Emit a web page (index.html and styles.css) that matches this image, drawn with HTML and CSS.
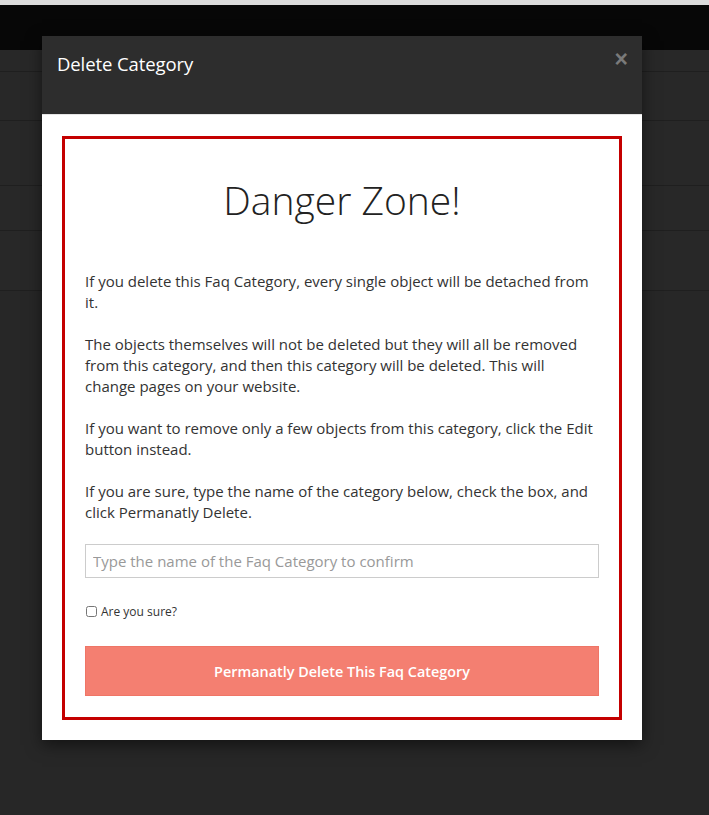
FILE: index.html
```html
<!DOCTYPE html>
<html>
<head>
<meta charset="utf-8">
<link rel="stylesheet" href="styles.css">
</head>
<body>
<div class="page">
  <div class="topstrip"></div>
  <div class="topbar"></div>
  <div class="rows">
    <div class="row r1"></div>
    <div class="row r2"></div>
    <div class="row r3"></div>
    <div class="row r4"></div>
    <div class="row r5"></div>
  </div>
</div>
<div class="modal">
  <div class="modal-header">
    <h4 class="modal-title">Delete Category</h4>
    <span class="close">&times;</span>
  </div>
  <div class="modal-body">
    <div class="danger">
      <h1 class="danger-title">Danger Zone!</h1>
      <p>If you delete this Faq Category, every single object will be detached from it.</p>
      <p>The objects themselves will not be deleted but they will all be removed from this category, and then this category will be deleted. This will change pages on your website.</p>
      <p>If you want to remove only a few objects from this category, click the Edit button instead.</p>
      <p>If you are sure, type the name of the category below, check the box, and click Permanatly Delete.</p>
      <input class="confirm-input" type="text" placeholder="Type the name of the Faq Category to confirm">
      <label class="check"><input type="checkbox"> Are you sure?</label>
      <button class="delete-btn">Permanatly Delete This Faq Category</button>
    </div>
  </div>
</div>
</body>
</html>
```
FILE: styles.css
```css
html, body {
  margin: 0;
  padding: 0;
  height: 100%;
}
body {
  background: #272727;
  font-family: "Open Sans", "Liberation Sans", sans-serif;
  overflow: hidden;
}
.topstrip {
  height: 5px;
  background: #dcdcdc;
}
.topbar {
  height: 45px;
  background: #070707;
}
.row {
  background: #282828;
  border-bottom: 1px solid #1f1f1f;
}
.r1 { height: 21px; }
.r2 { height: 48px; }
.r3 { height: 64px; }
.r4 { height: 44px; }
.r5 { height: 59px; }

.modal {
  position: absolute;
  top: 36px;
  left: 42px;
  width: 600px;
  background: #fff;
  box-shadow: 0 5px 15px rgba(0, 0, 0, 0.5);
}
.modal-header {
  position: relative;
  height: 79px;
  background: #2d2d2d;
  border-bottom: 1px solid #e5e5e5;
  padding: 15px 15px 0;
  box-sizing: border-box;
}
.modal-title {
  margin: 0;
  color: #fff;
  font-size: 18.5px;
  font-weight: 400;
  line-height: 26px;
  letter-spacing: -0.1px;
}
.close {
  position: absolute;
  top: 10px;
  right: 14px;
  color: #7a7a7a;
  font-family: "Liberation Sans", sans-serif;
  font-size: 23px;
  font-weight: 700;
  line-height: 26px;
}
.modal-body {
  padding: 21px 20px 20px;
}
.danger {
  border: 3px solid #c40000;
  padding: 0 20px 21px;
  color: #333;
}
.danger-title {
  margin: 39px 0 49px;
  font-size: 39px;
  font-weight: 300;
  line-height: 44px;
  text-align: center;
  color: #222;
}
.danger p {
  margin: 0 3px 21px 0;
  font-size: 15px;
  line-height: 21px;
}
.confirm-input {
  display: block;
  box-sizing: border-box;
  width: 100%;
  height: 34px;
  margin-top: 0;
  padding: 4px 7px;
  border: 1px solid #ccc;
  border-radius: 0;
  font-family: "Open Sans", "Liberation Sans", sans-serif;
  font-size: 15px;
  color: #555;
}
.confirm-input::placeholder {
  color: #999;
}
.check {
  display: flex;
  align-items: center;
  gap: 4px;
  margin-top: 25px;
  font-size: 12px;
  line-height: 17px;
  color: #333;
}
.check input {
  margin: 0 0 0 1px;
  width: 11px;
  height: 11px;
}
.delete-btn {
  display: block;
  width: 100%;
  height: 50px;
  margin-top: 26px;
  background: #f47f71;
  border: 1px solid #ef7566;
  color: #fff;
  font-family: "Open Sans", "Liberation Sans", sans-serif;
  font-size: 14.4px;
  font-weight: 600;
}
```
